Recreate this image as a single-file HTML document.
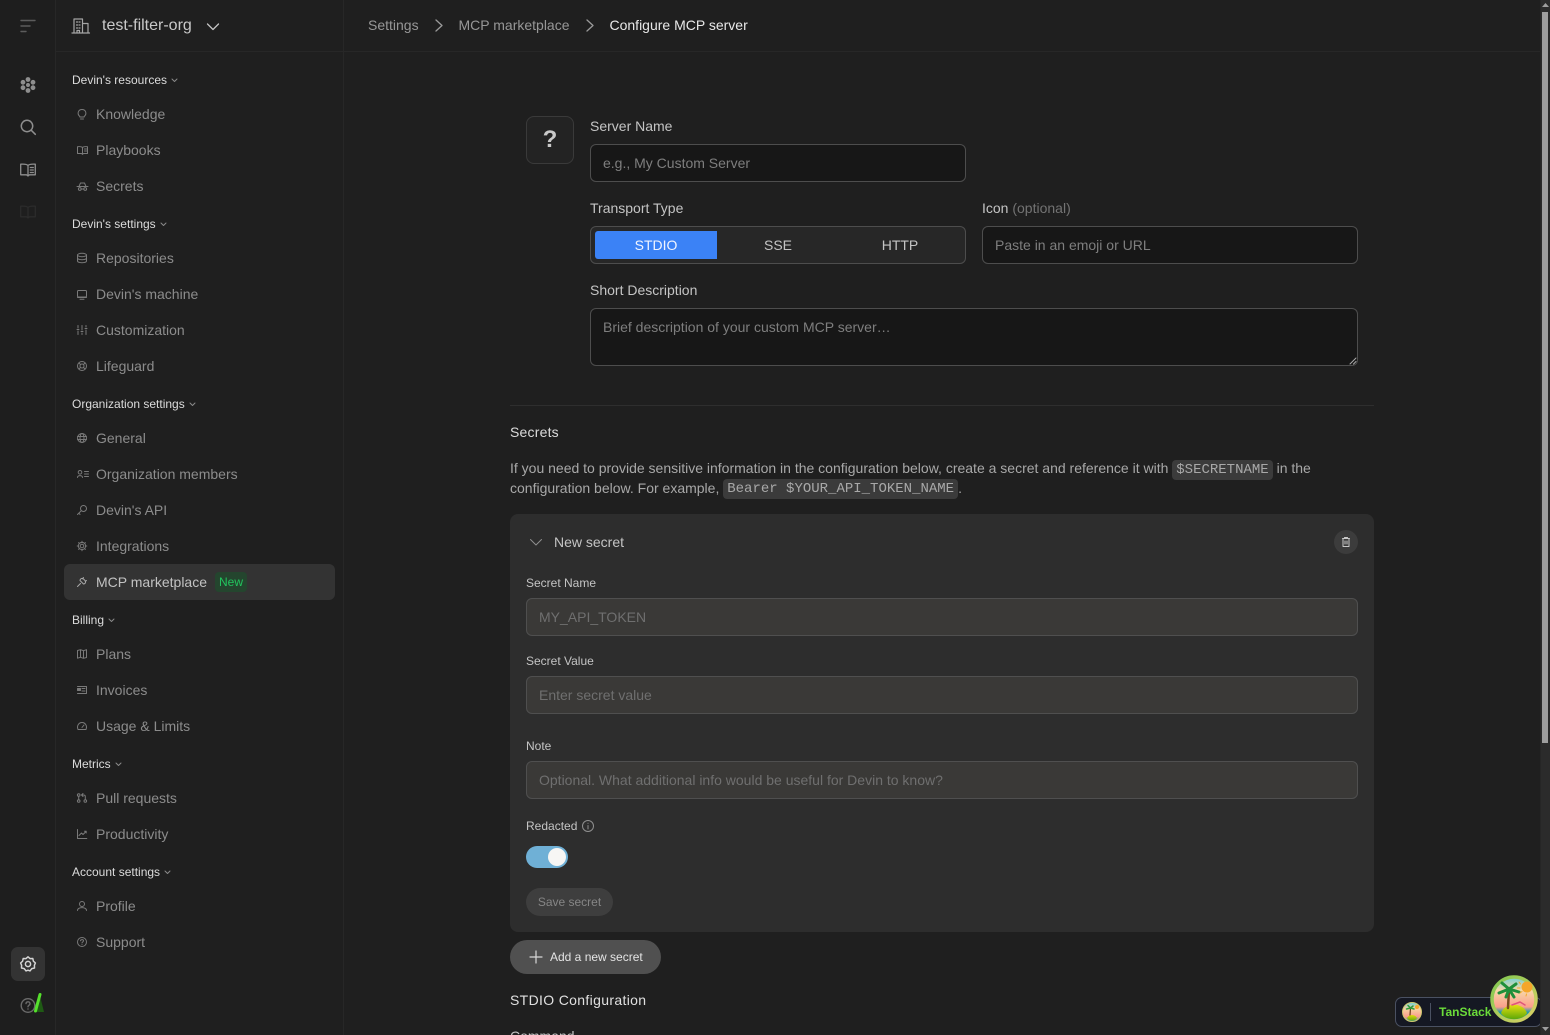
<!DOCTYPE html>
<html lang="en"><head><meta charset="utf-8"><title>Configure MCP server</title>
<style>
*{box-sizing:border-box}
html,body{margin:0;width:1550px;height:1035px;overflow:hidden;background:#1f1f1f;font-family:"Liberation Sans",sans-serif;font-size:14px}
#root{position:relative;width:1550px;height:1035px;overflow:hidden;background:#1f1f1f}
.t{position:absolute;white-space:nowrap;line-height:20px}
.i{position:absolute;white-space:nowrap;left:96px;line-height:20px;font-size:14px;color:#8c8c8c}
.h{position:absolute;white-space:nowrap;left:72px;line-height:16px;font-size:12px;color:#dcdcdc}
.h svg{margin-left:4px;vertical-align:1px}
.box{position:absolute;border-radius:6px}
svg{position:absolute;overflow:visible;fill:none;stroke-linecap:round;stroke-linejoin:round}
.h svg{position:static}
.dark{background:#171717;border:1px solid #4d4d4d}
.in{background:#3a3937;border:1px solid #4f4f4f;color:#6f6f6f;line-height:36px;padding-left:12px;white-space:nowrap}
.ph{color:#7e7e7e;padding-left:12px;line-height:36px;white-space:nowrap}
code{font-family:"Liberation Mono",monospace;font-size:14px;background:#3b3b3b;color:#a8a8a8;padding:2px 4px;border-radius:4px}
</style></head><body><div id="root">

<div class="box" style="left:0;top:0;width:56px;height:1035px;border-right:1px solid #272727;border-radius:0;background:#1e1e1e"></div>
<div class="box" style="left:343px;top:0;width:1px;height:1035px;background:#272727;border-radius:0"></div>
<div class="box" style="left:56px;top:51px;width:1485px;height:1px;background:#272727;border-radius:0"></div>

<!-- rail -->
<svg style="left:20px;top:19px" width="16" height="14" stroke="#5c5c5c" stroke-width="1.4"><path d="M1 1.5H15M1 7H10M1 12.500H6"/></svg>
<svg style="left:20px;top:77px" width="16" height="16"><g fill="#8e8e8e"><circle cx="8" cy="2.500" r="2.400"/><circle cx="8" cy="13.500" r="2.400"/><circle cx="3" cy="5.300" r="2.400"/><circle cx="13" cy="5.300" r="2.400"/><circle cx="3" cy="10.700" r="2.400"/><circle cx="13" cy="10.700" r="2.400"/><circle cx="8" cy="8" r="2"/></g></svg>
<svg style="left:20px;top:119px" width="16" height="16" stroke="#8e8e8e" stroke-width="1.5"><circle cx="7" cy="7" r="5.700"/><path d="M11.300 11.300L15.300 15.300"/></svg>
<svg style="left:20px;top:163px" width="16" height="14" stroke="#8e8e8e" stroke-width="1.3"><path d="M8 2.500C6.500 1 3 1 .7 1.200V11.800H6.500L8 13L9.500 11.800H15.300V1.200C13 1 9.500 1 8 2.500ZM8 2.500V12.500M10.300 4.500H13.300M10.300 7H13.300M10.300 9.500H13.300"/></svg>
<svg style="left:20px;top:205px" width="16" height="14" stroke="#2b2b2b" stroke-width="1.3"><path d="M8 2.500C6.500 1 3 1 .7 1.200V11.800H6.500L8 13L9.500 11.800H15.300V1.200C13 1 9.500 1 8 2.500ZM8 2.500V12.500"/></svg>
<div class="box" style="left:11px;top:947px;width:34px;height:34px;background:#333;border-radius:7px"></div>
<svg style="left:20px;top:956px" width="16" height="16" stroke="#d4d4d4" stroke-width="1.5"><path d="M8 .8L10 2.600L12.800 2.500L13.400 5.200L15.400 7L14.400 9.200L14.500 12L11.800 12.600L10 14.900L8 14.200L6 14.900L4.200 12.600L1.500 12L1.600 9.200L.6 7L2.600 5.200L3.200 2.500L6 2.600Z"/><circle cx="8" cy="8" r="2.600"/></svg>
<svg style="left:21px;top:998px" width="15" height="15" stroke="#6b6b6b" stroke-width="1.4"><circle cx="7" cy="7.500" r="6.800"/><path d="M5 5.600C5.200 3.200 9 3.200 9 5.600C9 7.300 7 7.200 7 8.800M7 11V11.100"/></svg>
<svg style="left:33px;top:993px" width="12" height="20"><path d="M7 3L11 19H3Z" fill="#1f5a14"/><path d="M7 1.500L2.500 18" stroke="#55e02c" stroke-width="3"/></svg>

<!-- org -->
<svg style="left:72px;top:18px" width="18" height="16" stroke="#a5a5a5" stroke-width="1.200"><path d="M0 15H17.500M2 15V1H10.500V15M10.500 5.500H16V15M4.500 4H5.500M7 4H8M4.500 7H5.500M7 7H8M4.500 10H5.500M7 10H8M5 15V12.500H7.500V15"/></svg>
<div class="t" style="left:102px;top:16px;font-size:16px;color:#c9c9c9">test-filter-org</div>
<svg style="left:207px;top:23px" width="12" height="8" stroke="#c4c4c4" stroke-width="1.3"><path d="M.5 1L6 6.500L11.500 1"/></svg>

<!-- nav -->
<div class="h" style="top:72px">Devin's resources<svg width="7" height="5" stroke="#8a8a8a"><path d="M1 1L3.500 3.500L6 1"/></svg></div>
<div class="i" style="top:104px">Knowledge</div>
<div class="i" style="top:140px">Playbooks</div>
<div class="i" style="top:176px">Secrets</div>
<div class="h" style="top:216px">Devin's settings<svg width="7" height="5" stroke="#8a8a8a"><path d="M1 1L3.500 3.500L6 1"/></svg></div>
<div class="i" style="top:248px">Repositories</div>
<div class="i" style="top:284px">Devin's machine</div>
<div class="i" style="top:320px">Customization</div>
<div class="i" style="top:356px">Lifeguard</div>
<div class="h" style="top:396px">Organization settings<svg width="7" height="5" stroke="#8a8a8a"><path d="M1 1L3.500 3.500L6 1"/></svg></div>
<div class="i" style="top:428px">General</div>
<div class="i" style="top:464px">Organization members</div>
<div class="i" style="top:500px">Devin's API</div>
<div class="i" style="top:536px">Integrations</div>
<div class="box" style="left:64px;top:564px;width:271px;height:36px;background:#333"></div>
<div class="i" style="top:572px;color:#c2c2c2">MCP marketplace</div>
<div class="box" style="left:215px;top:572px;width:32px;height:20px;background:#24452e;color:#22c55e;font-size:12px;line-height:20px;text-align:center;border-radius:4px">New</div>
<div class="h" style="top:612px">Billing<svg width="7" height="5" stroke="#8a8a8a"><path d="M1 1L3.500 3.500L6 1"/></svg></div>
<div class="i" style="top:644px">Plans</div>
<div class="i" style="top:680px">Invoices</div>
<div class="i" style="top:716px">Usage &amp; Limits</div>
<div class="h" style="top:756px">Metrics<svg width="7" height="5" stroke="#8a8a8a"><path d="M1 1L3.500 3.500L6 1"/></svg></div>
<div class="i" style="top:788px">Pull requests</div>
<div class="i" style="top:824px">Productivity</div>
<div class="h" style="top:864px">Account settings<svg width="7" height="5" stroke="#8a8a8a"><path d="M1 1L3.500 3.500L6 1"/></svg></div>
<div class="i" style="top:896px">Profile</div>
<div class="i" style="top:932px">Support</div>

<!-- nav icons -->
<svg style="left:77px;top:109px" width="10" height="11" stroke="#7a7a7a"><path d="M2.800 7.500C-.5 4.500 1.500 .5 5 .5S10.500 4.500 7.200 7.500V8H2.800ZM3.500 10H6.500"/></svg>
<svg style="left:77px;top:146px" width="11" height="9" stroke="#7a7a7a"><path d="M5.500 1.500C4.500 .5 2 .5 .5 .7V7.500H4.500L5.500 8.300L6.500 7.500H10.500V.7C9 .5 6.500 .5 5.500 1.500ZM5.500 1.500V8M7.500 3H9.500M7.500 5H9.500"/></svg>
<svg style="left:77px;top:182px" width="11" height="9" stroke="#7a7a7a"><path d="M0 4.500H11M2 4.500L3.500 1H7.500L9 4.500"/><circle cx="2.800" cy="7" r="1.400"/><circle cx="8.200" cy="7" r="1.400"/><path d="M4.200 7H6.800"/></svg>
<svg style="left:77px;top:253px" width="10" height="10" stroke="#7a7a7a"><ellipse cx="5" cy="2" rx="4.500" ry="1.700"/><path d="M.5 2V8C.5 9 2.500 9.700 5 9.700S9.500 9 9.500 8V2M.5 5C.5 6 2.500 6.700 5 6.700S9.500 6 9.500 5"/></svg>
<svg style="left:77px;top:290px" width="10" height="10" stroke="#7a7a7a"><rect x=".5" y=".5" width="9" height="6.500" rx="1"/><path d="M3 9.300H7M.5 7.500H9.500"/></svg>
<svg style="left:77px;top:325px" width="10" height="10" stroke="#7a7a7a"><path d="M1 .5V3M1 6V9.500M5 .5V5M5 8V9.500M9 .5V2M9 5V9.500M0 4.500H2M4 6.500H6M8 3.500H10"/></svg>
<svg style="left:77px;top:361px" width="10" height="10" stroke="#7a7a7a"><circle cx="5" cy="5" r="4.500"/><circle cx="5" cy="5" r="2"/><path d="M2 2L3.500 3.500M8 2L6.500 3.500M2 8L3.500 6.500M8 8L6.500 6.500"/></svg>
<svg style="left:77px;top:433px" width="10" height="10" stroke="#7a7a7a"><circle cx="5" cy="5" r="4.500"/><ellipse cx="5" cy="5" rx="2" ry="4.500"/><path d="M.5 3.500H9.500M.5 6.500H9.500"/></svg>
<svg style="left:77px;top:470px" width="12" height="8" stroke="#7a7a7a"><circle cx="3" cy="2.300" r="1.800"/><path d="M.5 7.500C.5 5 5.500 5 5.500 7.500M7.500 1.500H11.500M7.500 4H11.500M7.500 6.500H11.500"/></svg>
<svg style="left:77px;top:505px" width="10" height="10" stroke="#7a7a7a"><circle cx="6.500" cy="3.500" r="3"/><path d="M4.300 5.700L.5 9.500M1.800 8.200L3 9.400"/></svg>
<svg style="left:77px;top:541px" width="10" height="10" stroke="#7a7a7a"><circle cx="5" cy="5" r="3.600"/><circle cx="5" cy="5" r="1.800"/><path d="M5 .2V1.400M5 8.600V9.800M.2 5H1.400M8.600 5H9.800M1.600 1.600L2.400 2.400M7.600 7.600L8.400 8.400M8.400 1.600L7.600 2.400M2.400 7.600L1.600 8.400"/></svg>
<svg style="left:77px;top:577px" width="10" height="10" stroke="#a8a8a8"><path d="M3 3.500L6.500 7C8 7 9 5.500 8.500 4L6 1.500C4.500 1 3 2 3 3.500ZM6.500 .5L5.500 1.800M9.500 3.500L8.200 4.500M3.500 6.500L.5 9.500"/></svg>
<svg style="left:77px;top:649px" width="10" height="10" stroke="#7a7a7a"><path d="M.5 1.500L3.500 .7L6.500 1.700L9.500 .7V8.500L6.500 9.300L3.500 8.300L.5 9.200ZM3.500 .7V8.300M6.500 1.700V9.300"/></svg>
<svg style="left:77px;top:686px" width="10" height="8" stroke="#7a7a7a"><path d="M2 .5H9.500V7.500H.5M.5 .5H2M5 2.500H8M5 5H8"/><rect x=".5" y="2.500" width="3" height="2" fill="#7a7a7a"/></svg>
<svg style="left:77px;top:722px" width="10" height="8" stroke="#7a7a7a"><path d="M1 7.500C-.5 3.500 2 .5 5 .5S10.500 3.500 9 7.500ZM5 5.500L7 3"/></svg>
<svg style="left:77px;top:793px" width="10" height="10" stroke="#7a7a7a"><circle cx="1.700" cy="8" r="1.300"/><circle cx="1.700" cy="2" r="1.300"/><circle cx="8.300" cy="8" r="1.300"/><path d="M1.700 3.300V6.700M8.300 6.700V3.500C8.300 2.500 7.500 2 6.500 2H5M6 .5L4.500 2L6 3.500"/></svg>
<svg style="left:77px;top:829px" width="10" height="10" stroke="#7a7a7a"><path d="M.5 .5V9.500H9.800M2 6.500L4.500 4L6 5.500L9 2.500M7.500 2.300H9.200V4"/></svg>
<svg style="left:77px;top:901px" width="10" height="10" stroke="#7a7a7a"><circle cx="5" cy="3" r="2.500"/><path d="M.5 9.500C.5 5.700 9.500 5.700 9.500 9.500"/></svg>
<svg style="left:77px;top:937px" width="10" height="10" stroke="#7a7a7a"><circle cx="5" cy="5" r="4.500"/><path d="M3.500 3.800C3.700 2.200 6.500 2.200 6.500 3.800C6.500 5 5 5 5 6M5 7.500V7.600"/></svg>

<!-- breadcrumb -->
<div class="t" style="left:368px;top:15px;color:#979797">Settings</div>
<svg style="left:435px;top:19px" width="8" height="13" stroke="#9a9a9a" stroke-width="1.300"><path d="M1 1L7 6.500L1 12"/></svg>
<div class="t" style="left:458.500px;top:15px;color:#979797">MCP marketplace</div>
<svg style="left:586px;top:19px" width="8" height="13" stroke="#9a9a9a" stroke-width="1.300"><path d="M1 1L7 6.500L1 12"/></svg>
<div class="t" style="left:609.500px;top:15px;color:#e8e8e8">Configure MCP server</div>

<!-- icon box -->
<div class="box" style="left:526px;top:116px;width:48px;height:48px;border:1px solid #3a3a3a;border-radius:8px;background:#232323;color:#c9c9c9;font-size:24px;font-weight:bold;text-align:center;line-height:46px">?</div>

<div class="t" style="left:590px;top:116px;color:#c4c4c4">Server Name</div>
<div class="box dark ph" style="left:590px;top:144px;width:376px;height:38px">e.g., My Custom Server</div>

<div class="t" style="left:590px;top:198px;color:#c4c4c4">Transport Type</div>
<div class="box" style="left:590px;top:226px;width:376px;height:38px;background:#272727;border:1px solid #4d4d4d"></div>
<div class="box" style="left:595px;top:231px;width:122px;height:28px;background:#3b82f6;border-radius:3px 0 0 3px;color:#f0f4ff;text-align:center;line-height:28px">STDIO</div>
<div class="t" style="left:717px;top:235px;width:122px;text-align:center;color:#c4c4c4">SSE</div>
<div class="t" style="left:839px;top:235px;width:122px;text-align:center;color:#c4c4c4">HTTP</div>

<div class="t" style="left:982px;top:198px;color:#c4c4c4">Icon <span style="color:#737373">(optional)</span></div>
<div class="box dark ph" style="left:982px;top:226px;width:376px;height:38px">Paste in an emoji or URL</div>

<div class="t" style="left:590px;top:280px;color:#c4c4c4">Short Description</div>
<div class="box dark ph" style="left:590px;top:308px;width:768px;height:58px;line-height:20px;padding-top:8px">Brief description of your custom MCP server…</div>
<svg style="left:1349px;top:357px" width="8" height="8" stroke="#aaa"><path d="M1 7L7 1M4.500 7L7 4.500"/></svg>

<div class="box" style="left:510px;top:405px;width:864px;height:1px;background:#2e2e2e;border-radius:0"></div>
<div class="t" style="left:510px;top:422px;color:#dcdcdc;letter-spacing:.2px">Secrets</div>
<div class="t" style="left:510px;top:458px;color:#a8a8a8">If you need to provide sensitive information in the configuration below, create a secret and reference it with <code>$SECRETNAME</code> in the</div>
<div class="t" style="left:510px;top:478px;color:#a8a8a8">configuration below. For example, <code style="position:relative;top:-1px">Bearer $YOUR_API_TOKEN_NAME</code>.</div>

<!-- secret card -->
<div class="box" style="left:510px;top:514px;width:864px;height:418px;background:#2d2d2d;border-radius:8px"></div>
<svg style="left:530px;top:539px" width="12" height="7" stroke="#8f8f8f" stroke-width="1"><path d="M.5 .5L6 6L11.500 .5"/></svg>
<div class="t" style="left:554px;top:532px;color:#c4c4c4">New secret</div>
<div class="box" style="left:1334px;top:530px;width:24px;height:24px;border-radius:50%;background:#3c3c3c"></div>
<svg style="left:1342px;top:537px" width="8" height="10" stroke="#c8c8c8"><path d="M.5 1.500H7.500M2.500 1.500V.5H5.500V1.500M1 1.500V9.500H7V1.500M3 4V7M5 4V7"/></svg>

<div class="t" style="left:526px;top:573px;font-size:12px;color:#c4c4c4">Secret Name</div>
<div class="box in" style="left:526px;top:598px;width:832px;height:38px">MY_API_TOKEN</div>
<div class="t" style="left:526px;top:651px;font-size:12px;color:#c4c4c4">Secret Value</div>
<div class="box in" style="left:526px;top:676px;width:832px;height:38px">Enter secret value</div>
<div class="t" style="left:526px;top:736px;font-size:12px;color:#c4c4c4">Note</div>
<div class="box in" style="left:526px;top:761px;width:832px;height:38px">Optional. What additional info would be useful for Devin to know?</div>
<div class="t" style="left:526px;top:816px;font-size:12px;color:#c4c4c4">Redacted</div>
<svg style="left:582px;top:820px" width="12" height="12" stroke="#8f8f8f"><circle cx="6" cy="6" r="5.500"/><path d="M6 5.500V9M6 3.300V3.400"/></svg>
<div class="box" style="left:526px;top:846px;width:42px;height:22px;border-radius:11px;background:#6fb0d6"></div>
<div class="box" style="left:548px;top:848px;width:18px;height:18px;border-radius:50%;background:#f7f6f4"></div>
<div class="box" style="left:526px;top:888px;width:87px;height:28px;border-radius:14px;background:#3e3e3e;color:#868686;font-size:12px;line-height:28px;text-align:center">Save secret</div>

<div class="box" style="left:510px;top:940px;width:151px;height:34px;border-radius:17px;background:#505050"></div>
<svg style="left:530px;top:951px" width="12" height="12" stroke="#d8d8d8" stroke-width="1.200"><path d="M6 0V12M0 6H12"/></svg>
<div class="t" style="left:550px;top:947px;font-size:12px;color:#e4e4e4">Add a new secret</div>

<div class="t" style="left:510px;top:990px;color:#e0e0e0;letter-spacing:.34px">STDIO Configuration</div>
<div class="t" style="left:510px;top:1026px;color:#c4c4c4">Command</div>

<!-- devtools -->
<div class="box" style="left:1395px;top:997px;width:147px;height:30px;border:1px solid #4a5162;border-radius:7px;background:#151823"></div>
<svg style="left:1402px;top:1002px" width="20" height="20"><defs><linearGradient id="a" x1="0" y1="0" x2="0" y2="1"><stop offset="0" stop-color="#6fd0d8"/><stop offset=".35" stop-color="#f7d3a0"/><stop offset=".75" stop-color="#fb9c8c"/><stop offset="1" stop-color="#1f9aa5"/></linearGradient><linearGradient id="g1" x1="0" y1="0" x2="0" y2="1"><stop offset="0" stop-color="#e0dc10"/><stop offset="1" stop-color="#6aa80a"/></linearGradient></defs><circle cx="10" cy="10" r="9.500" fill="url(#a)" stroke="#cfc870"/><path d="M5 16C7 12 13 12 15 16C13 19.500 7 19.500 5 16Z" fill="url(#g1)"/><path d="M8 13L8.500 6" stroke="#6a3a1a" stroke-width="1.200"/><path d="M8.500 6L4.500 7M8.500 6L12 7M8.500 6L6 3.500M8.500 6L11 4" stroke="#2f9a3a" stroke-width="1.500"/><circle cx="15" cy="5" r="2" fill="#f7a52a"/></svg>
<div class="box" style="left:1430px;top:1003px;width:1px;height:18px;background:#4a5162;border-radius:0"></div>
<div class="t" style="left:1439px;top:1002px;font-size:12px;font-weight:bold;color:#6bdc3a">TanStack</div>
<svg style="left:1490px;top:975px" width="48" height="48"><defs><linearGradient id="b" x1="0" y1="0" x2="0" y2="1"><stop offset="0" stop-color="#6fd0d8"/><stop offset=".3" stop-color="#f6d8a8"/><stop offset=".68" stop-color="#fb9f8c"/><stop offset=".8" stop-color="#1f9aa5"/><stop offset="1" stop-color="#1f9aa5"/></linearGradient><linearGradient id="c" x1="0" y1="0" x2="1" y2="1"><stop offset="0" stop-color="#7ec850"/><stop offset="1" stop-color="#dcd066"/></linearGradient><linearGradient id="g2" x1="0" y1="0" x2="0" y2="1"><stop offset="0" stop-color="#e6e010"/><stop offset="1" stop-color="#5ea808"/></linearGradient></defs><circle cx="24" cy="24" r="22" fill="url(#b)" stroke="url(#c)" stroke-width="3.500"/><path d="M11 38C15 27 33 27 37 38C33 46 15 46 11 38Z" fill="url(#g2)"/><path d="M18 33L19 14" stroke="#7a4a20" stroke-width="2.500"/><path d="M19 14L9 18M19 14L29 17M19 14L12 8M19 14L26 9M19 14L16 22M19 14L24 22" stroke="#1f8f3a" stroke-width="3"/><circle cx="37" cy="12" r="5.500" fill="#f5a62a"/><path d="M29 7L30.500 9M27.500 13H30M30 18L32 16.500M36 21L36.500 19" stroke="#f5a62a"/><path d="M22 30L30 27L35 30" stroke="#e0557a" stroke-width="1.500"/></svg>

<!-- scrollbar -->
<div class="box" style="left:1540px;top:0;width:10px;height:1035px;background:#2b2b2b;border-left:1px solid #262626;border-radius:0"></div>
<div class="box" style="left:1542px;top:12px;width:6px;height:731px;background:#9e9e9e;border-radius:0"></div>
<svg style="left:1542px;top:3px" width="7" height="5"><path d="M3.500 0L7 4H0Z" fill="#9e9e9e"/></svg>
<svg style="left:1542px;top:1027px" width="7" height="5"><path d="M0 0H7L3.500 4Z" fill="#9e9e9e"/></svg>
</div></body></html>
